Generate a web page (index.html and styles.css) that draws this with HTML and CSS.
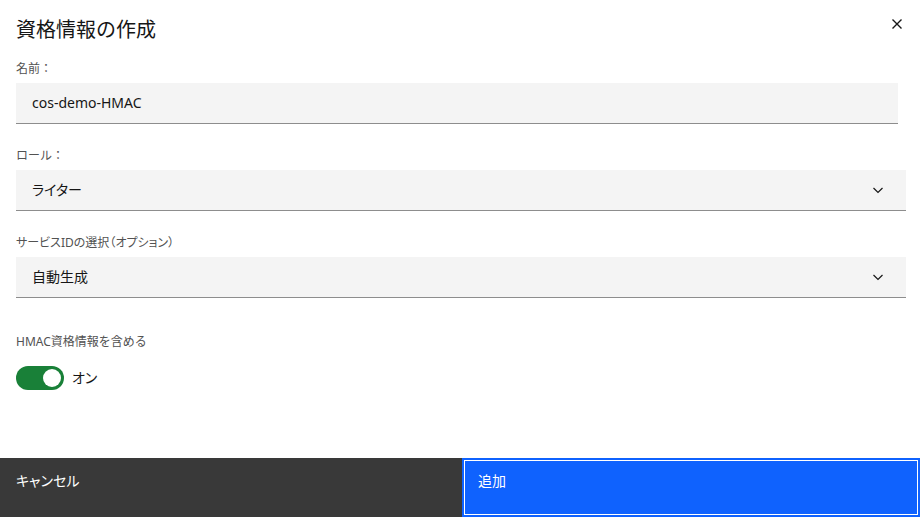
FILE: index.html
```html
<!DOCTYPE html>
<html lang="ja">
<head>
<meta charset="utf-8">
<link rel="stylesheet" href="styles.css">
</head>
<body>
<div class="modal">
  <div class="content">
    <div class="header">
      <h1 class="title">資格情報の作成</h1>
      <button class="close" aria-label="close">
        <svg width="16" height="16" viewBox="0 0 16 16"><path d="M3.5 3.5L12.5 12.5M12.5 3.5L3.5 12.5" stroke="#161616" stroke-width="1.4" fill="none"/></svg>
      </button>
    </div>
    <div class="group g1">
      <div class="label">名前：</div>
      <div class="field input-field">cos-demo-HMAC</div>
    </div>
    <div class="group g2">
      <div class="label">ロール：</div>
      <div class="field select-field"><span class="pal">ライター</span>
        <svg class="chev" width="16" height="16" viewBox="0 0 16 16"><path d="M3.5 6L8 10.5L12.5 6" stroke="#161616" stroke-width="1.2" fill="none"/></svg>
      </div>
    </div>
    <div class="group g3">
      <div class="label pal">サービスIDの選択（オプション）</div>
      <div class="field select-field"><span>自動生成</span>
        <svg class="chev" width="16" height="16" viewBox="0 0 16 16"><path d="M3.5 6L8 10.5L12.5 6" stroke="#161616" stroke-width="1.2" fill="none"/></svg>
      </div>
    </div>
    <div class="group g4">
      <div class="label toggle-label">HMAC資格情報を含める</div>
      <div class="toggle-row">
        <span class="toggle"><span class="knob"></span></span>
        <span class="toggle-text pal">オン</span>
      </div>
    </div>
  </div>
  <div class="footer">
    <button class="btn secondary pal">キャンセル</button>
    <button class="btn primary">追加</button>
  </div>
</div>
</body>
</html>
```

FILE: styles.css
```css
* { box-sizing: border-box; }
html, body { margin: 0; padding: 0; }
body {
  width: 920px;
  height: 517px;
  overflow: hidden;
  background: #fff;
  font-family: "Noto Sans", "Noto Sans CJK JP", sans-serif;
  color: #161616;
}
.pal { font-feature-settings: "palt"; }
.modal {
  height: 517px;
  display: flex;
  flex-direction: column;
}
.content {
  flex: 1;
  padding: 0 14px 0 16px;
}
.header {
  display: flex;
  justify-content: space-between;
  align-items: flex-start;
  height: 61px;
  padding-top: 16px;
}
.title {
  margin: 0;
  font-size: 20px;
  font-weight: 400;
  line-height: 28px;
  color: #161616;
}
.close {
  border: 0;
  background: none;
  padding: 0;
  margin: 0 1px 0 0;
  width: 16px;
  height: 16px;
  cursor: pointer;
}
.close svg { display: block; }
.label {
  font-size: 12px;
  line-height: 16px;
  color: #525252;
  margin-bottom: 6px;
}
.g2 { margin-top: 24px; }
.g3 { margin-top: 24px; }
.g4 { margin-top: 36px; }
.toggle-label { margin-bottom: 16px; }
.field {
  height: 41px;
  background: #f4f4f4;
  border-bottom: 1px solid #8d8d8d;
  font-size: 14px;
  line-height: 40px;
  padding-left: 16px;
  color: #161616;
}
.input-field { margin-right: 8px; }
.select-field {
  display: flex;
  align-items: center;
  justify-content: space-between;
  padding-right: 20px;
}
.chev { display: block; }
.toggle-row {
  display: flex;
  align-items: center;
  gap: 8px;
}
.toggle {
  width: 48px;
  height: 24px;
  border-radius: 12px;
  background: #198038;
  display: flex;
  align-items: center;
  justify-content: flex-end;
  padding-right: 3px;
}
.knob {
  width: 18px;
  height: 18px;
  border-radius: 50%;
  background: #fff;
}
.toggle-text {
  font-size: 14px;
  line-height: 18px;
  color: #161616;
}
.footer {
  height: 59px;
  display: flex;
}
.btn {
  flex: 1;
  border: 0;
  margin: 0;
  font-family: inherit;
  font-size: 14px;
  line-height: 18px;
  text-align: left;
  padding: 14px 16px 0 16px;
  display: flex;
  align-items: flex-start;
  color: #fff;
}
.secondary {
  background: #393939;
  flex: 0 0 462px;
}
.primary {
  background: #0f62fe;
  border: 2px solid #0f62fe;
  box-shadow: inset 0 0 0 1px #fff;
  padding: 12px 14px 0 14px;
}
```
